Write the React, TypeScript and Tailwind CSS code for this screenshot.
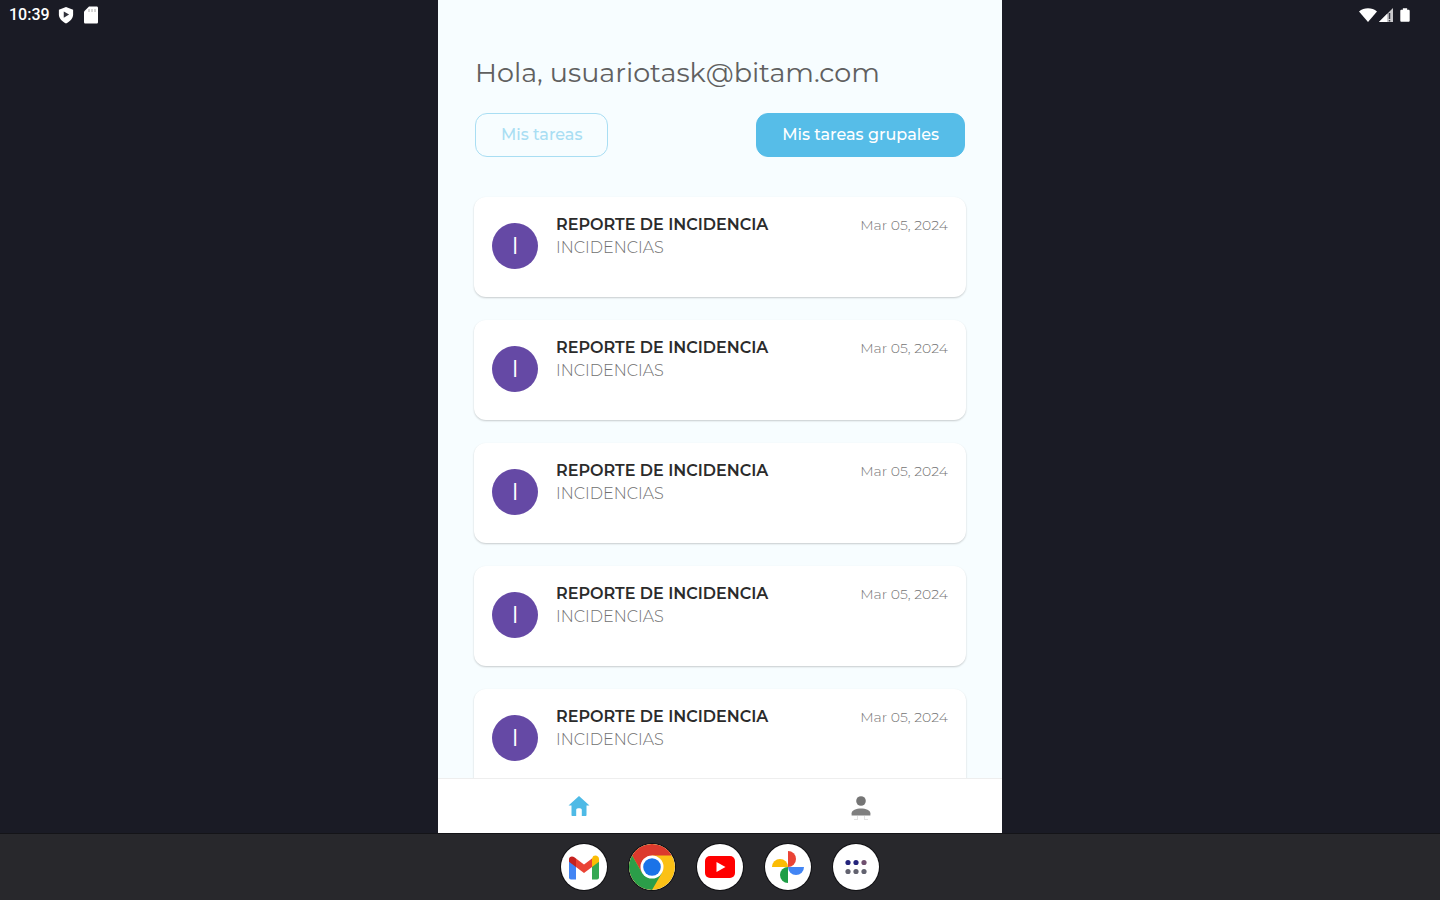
import { useState } from "react";

const tasks = [1, 2, 3, 4, 5].map((id) => ({
  id,
  title: "REPORTE DE INCIDENCIA",
  form: "INCIDENCIAS",
  date: "Mar 05, 2024",
}));

function TaskCard({ title, form, date }: { title: string; form: string; date: string }) {
  return (
    <li className="flex h-[100px] shrink-0 items-start rounded-xl bg-white px-[18px] shadow-[0_1px_2px_rgba(0,0,0,0.2)]">
      <div className="mt-[26px] flex size-[46px] shrink-0 items-center justify-center rounded-full bg-[#6549a5] text-2xl text-white">
        I
      </div>
      <div className="mt-4 ml-[18px] flex-1">
        <h2 className="text-base leading-6 font-semibold text-[#2b2b2b]">{title}</h2>
        <p className="text-base leading-[22px] font-light text-[#707070]">{form}</p>
      </div>
      <time className="mt-4 text-sm leading-6 font-light text-[#757575]">{date}</time>
    </li>
  );
}

function HomeIcon() {
  return (
    <svg viewBox="0 0 24 24" className="size-6" fill="currentColor">
      <path d="M12 2 1.500 11.600h3V21c0 .6.4 1 1 1h3.700v-6c0-1 .8-1.800 1.800-1.800h2c1 0 1.800.8 1.800 1.800v6h3.700c.6 0 1-.4 1-1v-9.400h3z" />
    </svg>
  );
}

function PersonIcon() {
  return (
    <svg viewBox="0 0 24 28" className="h-7 w-6">
      <circle cx="12" cy="9" r="4.800" fill="#757575" />
      <path d="M2.600 23.500v-2.200c0-3 4.600-4.800 9.400-4.800s9.400 1.800 9.400 4.800v2.200z" fill="#808080" />
      <path d="M5 27.500h4M15 27.500h4M8.500 24v3M15.500 24v3" stroke="#e3e3e3" strokeWidth="1" />
    </svg>
  );
}

const dockApps = [
  {
    name: "Gmail",
    icon: (
      <svg viewBox="0 0 46 46" className="size-full">
        <path d="M8 17v16.500c0 1.100.9 2 2 2h5V21z" fill="#4285f4" />
        <path d="M31 21v14.500h5c1.100 0 2-.9 2-2V17z" fill="#34a853" />
        <path d="M31 14.500V23l7-5.200V15c0-3-3.400-4.600-5.700-2.900z" fill="#fbbc04" />
        <path d="M15 23v-8.500l8 6 8-6V23l-8 6z" fill="#ea4335" />
        <path d="M8 15v2.800L15 23v-8.500l-1.300-1C11.400 11.700 8 12.500 8 15z" fill="#c5221f" />
      </svg>
    ),
  },
  {
    name: "Chrome",
    icon: (
      <svg viewBox="0 0 46 46" className="size-full">
        <circle cx="23" cy="23" r="23" fill="#fbc116" />
        <path d="M3.080 11.500A23 23 0 0 1 42.920 11.500H23L13 28.800z" fill="#dc3a2d" />
        <path d="M3.080 11.500A23 23 0 0 0 23 46l10-17.300L13 28.800z" fill="#2b9e49" />
        <circle cx="23" cy="23" r="11.500" fill="#fff" />
        <circle cx="23" cy="23" r="8.800" fill="#1a73e8" />
      </svg>
    ),
  },
  {
    name: "YouTube",
    icon: (
      <svg viewBox="0 0 46 46" className="size-full">
        <rect x="8" y="12" width="30" height="22" rx="5" fill="#f00" />
        <path d="m19.500 18 9 5-9 5z" fill="#fff" />
      </svg>
    ),
  },
  {
    name: "Google Fotos",
    icon: (
      <svg viewBox="0 0 46 46" className="size-full">
        <path d="M23 7a8 8 0 0 1 0 16z" fill="#ea4335" />
        <path d="M39 23a8 8 0 0 1-16 0z" fill="#4285f4" />
        <path d="M23 39a8 8 0 0 1 0-16z" fill="#1e9e46" />
        <path d="M7 23a8 8 0 0 1 16 0z" fill="#fbbc04" />
      </svg>
    ),
  },
  {
    name: "Aplicaciones",
    icon: (
      <svg viewBox="0 0 46 46" className="size-full">
        <g fill="#24247c">
          <circle cx="15" cy="18.500" r="2.600" />
          <circle cx="23" cy="18.500" r="2.600" />
        </g>
        <circle cx="31" cy="18.500" r="2.600" fill="#70506f" />
        <g fill="#62626f">
          <circle cx="15" cy="27.500" r="2.600" />
          <circle cx="23" cy="27.500" r="2.600" />
          <circle cx="31" cy="27.500" r="2.600" />
        </g>
      </svg>
    ),
  },
];

export default function App() {
  const [tab, setTab] = useState("group");

  const tabClass = (active: boolean) =>
    `h-11 rounded-xl border px-[25px] text-base font-medium ${
      active ? "border-[#56bde8] bg-[#56bde8] text-white" : "border-[#a9def3] bg-transparent text-[#a9def3]"
    }`;

  return (
    <div className="flex h-screen flex-col bg-[#1a1b25] font-['Montserrat','Inter',sans-serif]">
      <div className="grid min-h-0 flex-1 grid-cols-[1fr_minmax(0,564px)_1fr]">
        {/* Status bar, left */}
        <div className="flex h-[30px] items-center gap-2 pl-[9px] text-white">
          <span className="font-['Roboto',sans-serif] text-base font-medium">10:39</span>
          <svg viewBox="0 0 18 20" className="h-5 w-4">
            <path d="M9 1 1 4v5.500C1 14 4.500 17.500 9 19.500c4.500-2 8-5.500 8-10V4z" fill="#fff" />
            <path d="m6.500 6 6 3.500-6 3.500z" fill="#30313b" />
          </svg>
          <svg viewBox="0 0 16 20" className="h-5 w-[18px]">
            <path d="M6 1.500h7.500c1 0 1.500.6 1.500 1.500v14c0 1-.6 1.500-1.500 1.500h-11C1.500 18.500 1 18 1 17V6.500z" fill="#fff" />
            <path d="M6 4v3M9 4v3M12 4v3" stroke="#aaa" />
          </svg>
        </div>

        <main className="flex min-h-0 flex-col bg-[#f7fdff]">
          <div className="flex min-h-0 flex-1 flex-col overflow-hidden px-9 pt-[55px]">
            <h1 className="shrink-0 px-px text-[27px] leading-9 text-[#606060]">
              Hola, usuariotask@bitam.com
            </h1>
            <div className="mt-[22px] flex shrink-0 justify-between px-px">
              <button type="button" className={tabClass(tab === "mine")} onClick={() => setTab("mine")}>
                Mis tareas
              </button>
              <button type="button" className={tabClass(tab === "group")} onClick={() => setTab("group")}>
                Mis tareas grupales
              </button>
            </div>
            <ul className="mt-10 flex flex-col gap-[23px]">
              {tasks.map((t) => (
                <TaskCard key={t.id} title={t.title} form={t.form} date={t.date} />
              ))}
            </ul>
          </div>

          <nav className="grid h-[55px] shrink-0 grid-cols-2 border-t border-[#eeeeee] bg-white">
            <a href="#inicio" aria-label="Inicio" className="flex items-center justify-center text-[#4ebae6]">
              <HomeIcon />
            </a>
            <a href="#perfil" aria-label="Perfil" className="flex items-center justify-center">
              <PersonIcon />
            </a>
          </nav>
        </main>

        {/* Status bar, right */}
        <div className="flex h-[30px] items-center justify-end gap-px pr-[29px]">
          <svg viewBox="0 0 18 16" className="h-4 w-[18px]">
            <path d="M0 4.500C5 .3 13 .3 18 4.500L9 15z" fill="#fff" />
          </svg>
          <svg viewBox="0 0 16 16" className="size-4">
            <path d="M15 1v14H1z" fill="#c9c9cc" />
            <path d="M9 7v8H1z" fill="#fff" />
            <path d="M11.500 6v6M11.500 13v1.500" stroke="#3a3b44" strokeWidth="1.500" />
          </svg>
          <svg viewBox="0 0 14 18" className="ml-1 h-[18px] w-3">
            <path d="M4.500 1h5v2H11c1 0 1.500.5 1.500 1.500v11c0 1-.5 1.500-1.500 1.500H3c-1 0-1.500-.5-1.500-1.500v-11C1.500 3.500 2 3 3 3h1.500z" fill="#fff" />
          </svg>
        </div>
      </div>

      <footer className="flex h-[67px] shrink-0 items-center justify-center gap-[22px] border-t border-[#141418] bg-[#28282c]">
        {dockApps.map((app) => (
          <button
            key={app.name}
            type="button"
            aria-label={app.name}
            className="size-[46px] overflow-hidden rounded-full bg-white ring-1 ring-[#111114]"
          >
            {app.icon}
          </button>
        ))}
      </footer>
    </div>
  );
}
